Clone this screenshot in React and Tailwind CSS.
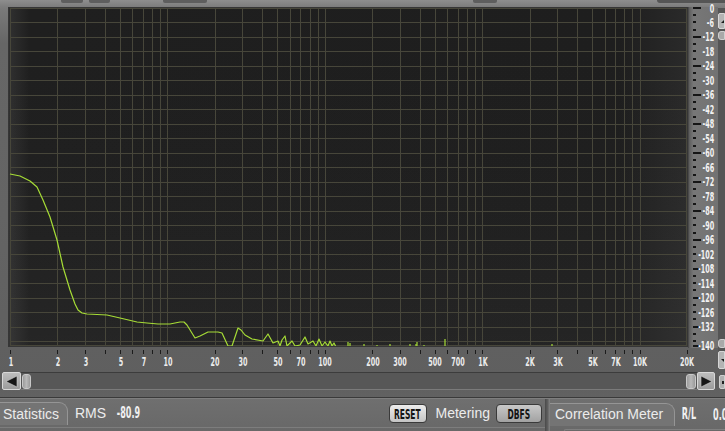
import React from "react";

const fx = (f) => 10 + 157.4 * Math.log10(f);
const dy = (db) => 8 + 2.414 * -db;

const gridFreqs = [];
[1, 10, 100, 1000].forEach((d) => {
  for (let m = 1; m <= 9; m++) gridFreqs.push(m * d);
});
gridFreqs.push(10000);

const freqLabels = [
  [1, "1"], [2, "2"], [3, "3"], [5, "5"], [7, "7"], [10, "10"], [20, "20"], [30, "30"],
  [50, "50"], [70, "70"], [100, "100"], [200, "200"], [300, "300"], [500, "500"],
  [700, "700"], [1000, "1K"], [2000, "2K"], [3000, "3K"], [5000, "5K"], [7000, "7K"],
  [10000, "10K"], [20000, "20K"],
];

const dbLabels = [];
for (let d = 0; d >= -132; d -= 6) dbLabels.push(d);
dbLabels.push(-140);

const dbTicks = [];
for (let d = 0; d >= -138; d -= 3) dbTicks.push(d);
dbTicks.push(-140);

const curve = [
  [10, 174], [20, 176], [30, 181], [37, 187], [43, 200], [50, 217], [57, 240], [63, 267],
  [70, 290], [75, 304], [78, 310], [82, 313], [87, 314], [107, 315], [120, 318], [137, 322],
  [147, 323], [158, 324], [170, 324], [180, 322], [184, 322], [187, 325], [195, 338],
  [200, 336], [208, 332], [218, 332], [222, 333], [228, 346], [232, 346], [238, 328],
  [241, 330], [245, 335], [252, 339], [263, 341], [268, 334], [273, 343], [278, 341],
  [280, 346], [282, 340], [285, 336], [287, 346], [292, 341], [295, 346], [300, 345],
  [305, 337], [308, 344], [313, 341], [316, 346], [319, 339], [322, 346], [325, 342],
  [328, 346], [330, 341], [332, 346], [334, 343], [336, 347],
];

const spikes = [
  [348, 342], [350, 343], [364, 344], [377, 345], [390, 344], [410, 344], [416, 344],
  [417, 342], [424, 345], [445, 339], [552, 344],
];

const cond = "font-['DejaVu_Sans_Condensed','DejaVu_Sans',sans-serif] font-bold";

function Plot() {
  return (
    <div className="ml-[8px] w-[680px] h-[340px] border border-[#363636] bg-[linear-gradient(90deg,#303030_0%,#1f1f1f_3%,#1e1e1e_90%,#2a2a2a_100%)]">
      <svg width="678" height="338" viewBox="9 8 678 338" className="block">
        <defs>
          <linearGradient id="vsh" x1="0" y1="0" x2="0" y2="1">
            <stop offset="0" stopColor="#000" stopOpacity="0" />
            <stop offset="1" stopColor="#fff" stopOpacity="0.03" />
          </linearGradient>
        </defs>
        <rect x="9" y="8" width="678" height="338" fill="url(#vsh)" />
        <g stroke="#47463a" strokeWidth="1" shapeRendering="crispEdges">
          {gridFreqs.map((f) => {
            const x = Math.round(fx(f)) + 0.5;
            return <line key={f} x1={x} y1="8" x2={x} y2="346" />;
          })}
          {dbLabels.slice(1, -1).concat([-138]).map((d) => {
            const y = Math.round(dy(d)) + 0.5;
            return <line key={d} x1="10" y1={y} x2="687" y2={y} />;
          })}
          <line x1="10" y1="8.5" x2="687" y2="8.5" />
          <line x1="686.5" y1="8" x2="686.5" y2="346" />
          <line x1="10" y1="345.5" x2="687" y2="345.5" />
        </g>
        <polyline
          points={curve.map((p) => p.join(",")).join(" ")}
          fill="none"
          stroke="#a6dc36"
          strokeWidth="1.2"
          strokeLinejoin="round"
        />
        <g stroke="#a6dc36" strokeWidth="1.2">
          {spikes.map(([x, y], i) => (
            <line key={i} x1={x} y1={y} x2={x} y2="346" />
          ))}
        </g>
      </svg>
    </div>
  );
}

function FreqAxis() {
  return (
    <div className="relative h-[25px]">
      {gridFreqs.concat([20000]).map((f) => (
        <div
          key={f}
          className="absolute top-[3px] w-px h-[4px] bg-[#1c1c1c]"
          style={{ left: Math.round(fx(f)) }}
        />
      ))}
      {freqLabels.map(([f, t]) => (
        <span
          key={t}
          className={`absolute top-[8px] leading-[13px] text-[13px] text-[#ececec] whitespace-nowrap -translate-x-1/2 scale-x-[0.55] ${cond}`}
          style={{ left: fx(f) + 0.5 }}
        >
          {t}
        </span>
      ))}
    </div>
  );
}

function DbAxis() {
  return (
    <div className="relative w-[30px] h-[341px] bg-[linear-gradient(90deg,#5c5c5c_0%,#777_15%,#727272_100%)] border-l border-[#4a4a4a]">
      {dbTicks.map((d) => {
        const long = d % 12 === 0 || d === -140;
        return (
          <div
            key={d}
            className={`absolute left-[4px] h-[2px] bg-[#151515] ${long ? "w-[8px]" : "w-[3px]"}`}
            style={{ top: Math.round(dy(d)) - 8 }}
          />
        );
      })}
      {dbLabels.map((d) => (
        <span
          key={d}
          className={`absolute right-[4px] leading-[13px] text-[13px] text-[#f2f2f2] whitespace-nowrap origin-right scale-x-[0.55] ${cond}`}
          style={{ top: dy(d) - 7 - 6.5 }}
        >
          {d}
        </span>
      ))}
    </div>
  );
}

function VScroll() {
  return (
    <div className="w-[7px] mt-[1px] h-[361px] flex flex-col bg-[#555]">
      <div className="h-[16px] mt-[5px] bg-[#b4b4b4] border border-[#d6d6d6] rounded-l-[2px] flex items-center pl-[2px]">
        <svg width="5" height="5" viewBox="0 0 5 5">
          <polygon points="0,5 5,5 5,0" fill="#1a1a1a" />
        </svg>
      </div>
      <div className="h-[9px] mt-[2px] bg-[#a9a9a9] border border-[#cfcfcf] rounded-l-[3px]" />
      <div className="flex-1" />
      <div className="h-[9px] bg-[#a9a9a9] border border-[#cfcfcf] rounded-l-[3px]" />
      <div className="h-[18px] mt-[3px] bg-[#b4b4b4] border border-[#d6d6d6] rounded-l-[2px] flex items-center pl-[2px]">
        <svg width="5" height="5" viewBox="0 0 5 5">
          <polygon points="0,0 5,0 5,5" fill="#1a1a1a" />
        </svg>
      </div>
    </div>
  );
}

function HScroll() {
  return (
    <div className="h-[18px] flex pl-[2px]">
      <div className="w-[19px] h-full bg-[linear-gradient(180deg,#bdbdbd,#9c9c9c)] border border-[#d8d8d8] rounded-[2px] flex items-center justify-center">
        <svg width="13" height="13" viewBox="0 0 13 13">
          <polygon points="12,1 12,12 1,6.5" fill="#161616" stroke="#d0d0d0" strokeWidth="0.6" />
        </svg>
      </div>
      <div className="flex-1 h-full flex items-center bg-[#575757] border-t border-[#3c3c3c] border-b border-b-[#7a7a7a]">
        <div className="ml-[1px] w-[9px] h-[15px] rounded-[3px] bg-[linear-gradient(90deg,#9c9c9c,#b8b8b8,#9a9a9a)] border border-[#c8c8c8]" />
        <div className="flex-1" />
        <div className="mr-[1px] w-[10px] h-[15px] rounded-[3px] bg-[linear-gradient(90deg,#9c9c9c,#b8b8b8,#9a9a9a)] border border-[#c8c8c8]" />
      </div>
      <div className="w-[18px] h-full bg-[linear-gradient(180deg,#bdbdbd,#9c9c9c)] border border-[#d8d8d8] rounded-[2px] flex items-center justify-center">
        <svg width="13" height="13" viewBox="0 0 13 13">
          <polygon points="1,1 1,12 12,6.5" fill="#161616" stroke="#d0d0d0" strokeWidth="0.6" />
        </svg>
      </div>
      <div className="ml-[4px] w-[6px] mt-[3px] h-[14px] bg-[#b0b0b0] border border-[#d0d0d0] rounded-l-[2px] flex items-center pl-[2px]">
        <div className="w-[3px] h-[3px] bg-[#222]" />
      </div>
    </div>
  );
}

function Tab({ children, w }) {
  return (
    <div
      className={`${w} shrink-0 h-[23px] flex items-center bg-[#747474] border-t border-r border-[#959595] rounded-tr-[9px] text-[14px] text-[#ebebeb] font-['Liberation_Sans',Arial,sans-serif] whitespace-nowrap`}
    >
      {children}
    </div>
  );
}

function Button({ children, w, light }) {
  return (
    <div
      className={`${w} shrink-0 h-[19px] flex items-center justify-center rounded-[4px] border border-[#3a3a3a] ${
        light
          ? "bg-[linear-gradient(180deg,#ececec,#c4c4c4)]"
          : "bg-[linear-gradient(180deg,#c8c8c8,#a2a2a2)]"
      }`}
    >
      <span className={`text-[14px] leading-[14px] text-[#141414] scale-x-[0.6] whitespace-nowrap ${cond}`}>
        {children}
      </span>
    </div>
  );
}

function BottomPanel() {
  const sans = "shrink-0 font-['Liberation_Sans',Arial,sans-serif] text-[14px] text-[#ececec] whitespace-nowrap";
  return (
    <div className="h-[32px] flex bg-[linear-gradient(180deg,#6f6f6f,#686868)]">
      <div className="w-[545px] shrink-0 flex flex-col">
        <div className="mt-[3px] flex items-center">
          <Tab w="w-[68px] pl-[3px]">Statistics</Tab>
          <span className={`ml-[7px] ${sans}`}>RMS</span>
          <div className="ml-[10px] w-[25px] shrink-0 flex justify-center">
            <span className={`text-[15px] text-[#f0f0f0] scale-x-[0.6] whitespace-nowrap ${cond}`}>-80.9</span>
          </div>
          <div className="flex-1" />
          <Button w="w-[38px]" light>RESET</Button>
          <span className={`ml-[9px] ${sans}`}>Metering</span>
          <div className="ml-[6px] mr-[3px] shrink-0">
            <Button w="w-[46px]">DBFS</Button>
          </div>
        </div>
        <div className="mt-[2px] h-px bg-[#8a8a8a] opacity-60" />
      </div>
      <div className="w-[5px] shrink-0 h-full bg-[linear-gradient(90deg,#4a4a4a,#5e5e5e,#858585)]" />
      <div className="w-[175px] shrink-0 flex flex-col overflow-hidden">
        <div className="mt-[3px] flex items-center">
          <Tab w="w-[125px] pl-[5px]">Correlation Meter</Tab>
          <div className="ml-[3px] w-[22px] shrink-0 flex justify-center">
            <span className={`text-[15px] text-[#f0f0f0] scale-x-[0.6] whitespace-nowrap ${cond}`}>R/L</span>
          </div>
          <div className="ml-[13px] shrink-0">
            <span className={`inline-block text-[15px] text-[#f0f0f0] origin-left scale-x-[0.6] whitespace-nowrap ${cond}`}>0.0</span>
          </div>
        </div>
        <div className="mt-[2px] ml-[14px] h-[4px] border-t border-l border-[#8a8a8a] rounded-tl-[6px] opacity-70" />
      </div>
    </div>
  );
}

export default function App() {
  return (
    <div className="w-[725px] h-[431px] overflow-hidden bg-[linear-gradient(180deg,#8c8c8c_0%,#7a7a7a_2%,#666_10%,#646464_50%,#5f5f5f_88%,#666_100%)]">
      <div className="h-[7px] flex items-start bg-[linear-gradient(180deg,#8e8e8e,#7c7c7c)]">
        <div className="ml-[61px] w-[22px] h-[3px] bg-[#5e5e5e] rounded-b-[2px]" />
        <div className="ml-[6px] w-[21px] h-[3px] bg-[#5e5e5e] rounded-b-[2px]" />
        <div className="ml-[53px] w-[44px] h-[3px] bg-[#5e5e5e] rounded-b-[2px]" />
        <div className="ml-[266px] w-[24px] h-[3px] bg-[#5e5e5e] rounded-b-[2px]" />
        <div className="ml-[160px] flex-1 h-[3px] bg-[#555] rounded-bl-[3px]" />
      </div>
      <div className="h-[365px] flex items-start">
        <div className="w-[688px] shrink-0">
          <Plot />
          <FreqAxis />
        </div>
        <DbAxis />
        <VScroll />
      </div>
      <HScroll />
      <div className="h-[7px]" />
      <div className="h-px bg-[#3a3a3a]" />
      <div className="h-px bg-[#7e7e7e]" />
      <BottomPanel />
    </div>
  );
}
